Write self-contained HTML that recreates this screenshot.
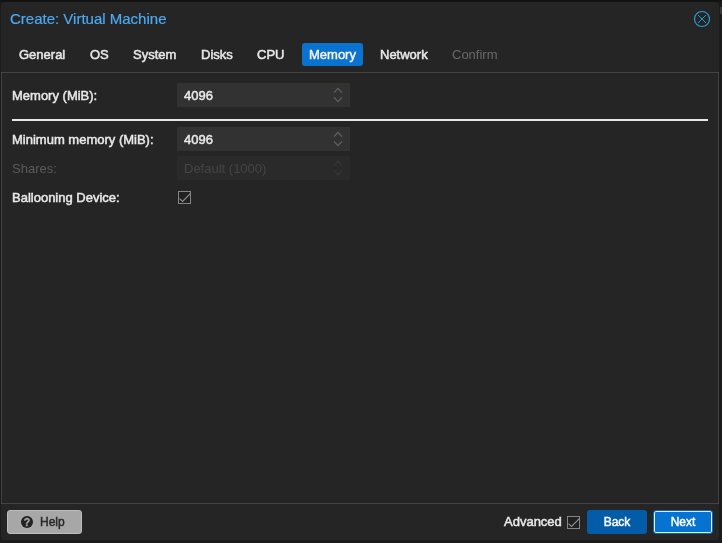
<!DOCTYPE html>
<html><head><meta charset="utf-8">
<style>
html,body{margin:0;padding:0;}
body{width:722px;height:543px;background:#1b1b1b;overflow:hidden;position:relative;font-family:"Liberation Sans",sans-serif;font-size:13px;color:#e9e9e9;}
.abs{position:absolute;}
#win{left:1px;top:2px;width:718px;height:538px;background:#262626;border-radius:4px;}
#title{left:10px;top:10px;font-size:15px;color:#4cabf3;-webkit-text-stroke:0.2px #4cabf3;line-height:18px;white-space:nowrap;}
.tab{top:43px;height:23px;line-height:23px;font-size:13px;color:#e9e9e9;white-space:nowrap;-webkit-text-stroke:0.5px #e9e9e9;}
#tabact{left:302px;top:43px;width:61px;height:23px;background:#0a74d0;border-radius:3px;}
#panel{left:1px;top:72px;width:718px;height:432px;border:1px solid #444;box-sizing:border-box;}
.lbl{left:12px;height:24px;line-height:26px;font-size:13px;white-space:nowrap;-webkit-text-stroke:0.5px #e9e9e9;}
.fld{left:177px;width:173px;height:24px;background:#333;}
.fld span{position:absolute;left:7px;top:0;line-height:26px;font-size:13px;-webkit-text-stroke:0.5px #e9e9e9;}
.dis{color:#5c5c5c;-webkit-text-stroke:0 !important;}
.dis span{color:#464646;-webkit-text-stroke:0 !important;}
#hr{left:12px;top:119px;width:696px;height:2px;background:#e8e8e8;}
.btn{top:510px;height:24px;line-height:24px;border-radius:3px;box-sizing:border-box;font-size:12px;text-align:center;-webkit-text-stroke:0.45px currentColor;}
</style></head><body>
<div id="root" class="abs" style="left:0;top:0;width:722px;height:543px;will-change:transform;opacity:0.999">
<div class="abs" style="left:720px;top:7px;width:2px;height:7px;background:#3a3a3a"></div>
<div class="abs" style="left:0;top:0;width:722px;height:2px;background:linear-gradient(#101010,#181818)"></div>
<div id="win" class="abs"></div>
<div id="title" class="abs">Create: Virtual Machine</div>
<svg class="abs" style="left:692px;top:9px" width="20" height="20" viewBox="0 0 20 20"><circle cx="10" cy="10" r="7.5" fill="none" stroke="#2a9fd6" stroke-width="1.2"/><path d="M6 6L14 14M14 6L6 14" stroke="#2797cf" stroke-width="1"/></svg>
<div id="tabact" class="abs"></div>
<div class="tab abs" style="left:19px">General</div>
<div class="tab abs" style="left:90px">OS</div>
<div class="tab abs" style="left:133px">System</div>
<div class="tab abs" style="left:201px">Disks</div>
<div class="tab abs" style="left:257px">CPU</div>
<div class="tab abs" style="left:309px;color:#fff">Memory</div>
<div class="tab abs" style="left:380px">Network</div>
<div class="tab abs" style="left:452px;color:#6a6a6a;-webkit-text-stroke:0">Confirm</div>
<div id="panel" class="abs"></div>
<div class="lbl abs" style="top:83px">Memory (MiB):</div>
<div class="fld abs" style="top:83px"><span>4096</span></div>
<div id="hr" class="abs"></div>
<div class="lbl abs" style="top:127px">Minimum memory (MiB):</div>
<div class="fld abs" style="top:127px"><span>4096</span></div>
<div class="lbl abs dis" style="top:156px">Shares:</div>
<div class="fld abs dis" style="top:156px;background:#2b2b2b"><span>Default (1000)</span></div>
<div class="lbl abs" style="top:185px">Ballooning Device:</div>
<div class="btn abs" style="left:7px;width:75px;background:#a8a8a8;color:#2a2a2a;border:1px solid #bdbdbd;line-height:22px;text-align:left;padding-left:32px">Help</div>
<div class="lbl abs" style="left:504px;top:509px">Advanced</div>
<div class="btn abs" style="left:587px;width:60px;background:#045da9;color:#fff;">Back</div>
<div class="btn abs" style="left:653px;width:60px;background:#0674d1;color:#fff;border:1px solid #0a6cc0;box-shadow:inset 0 0 0 1px #e4eef8;line-height:22px">Next</div>
<svg class="abs" style="left:330px;top:83px" width="16" height="24" viewBox="0 0 16 24"><path d="M4 9.7L8 5.3L12 9.7M4 14.3L8 18.7L12 14.3" fill="none" stroke="#646464" stroke-width="1.1"/></svg>
<svg class="abs" style="left:330px;top:127px" width="16" height="24" viewBox="0 0 16 24"><path d="M4 9.7L8 5.3L12 9.7M4 14.3L8 18.7L12 14.3" fill="none" stroke="#646464" stroke-width="1.1"/></svg>
<svg class="abs" style="left:330px;top:156px" width="16" height="24" viewBox="0 0 16 24"><path d="M4 9.7L8 5.3L12 9.7M4 14.3L8 18.7L12 14.3" fill="none" stroke="#383838" stroke-width="1.1"/></svg>
<svg class="abs" style="left:178px;top:191px" width="13" height="13" viewBox="0 0 13 13"><rect x="0.5" y="0.5" width="12" height="12" fill="#222" stroke="#868686" stroke-width="1"/><path d="M1.5 7.6L4.6 10.4L12.5 2.4" fill="none" stroke="#929292" stroke-width="1.1"/></svg>
<svg class="abs" style="left:567px;top:516px" width="13" height="13" viewBox="0 0 13 13"><rect x="0.5" y="0.5" width="12" height="12" fill="#222" stroke="#868686" stroke-width="1"/><path d="M1.5 7.6L4.6 10.4L12.5 2.4" fill="none" stroke="#929292" stroke-width="1.1"/></svg>
<svg class="abs" style="left:21px;top:516px" width="12" height="12" viewBox="0 0 12 12"><circle cx="6" cy="6" r="6" fill="#222"/><text x="6" y="9.8" font-size="10.5" font-weight="bold" stroke="#a8a8a8" stroke-width="0.3" text-anchor="middle" fill="#a8a8a8" font-family="Liberation Sans, sans-serif">?</text></svg>
</div>
</body></html>
